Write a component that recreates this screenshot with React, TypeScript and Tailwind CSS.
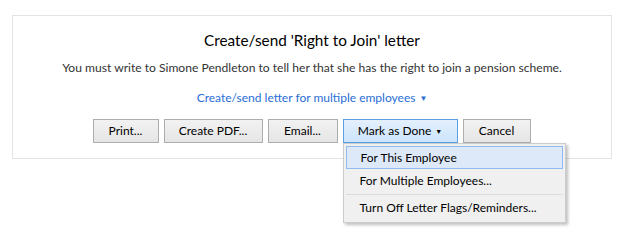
import React from "react";

const BTN =
  "h-6 border border-[#adadad] bg-gradient-to-b from-[#f2f2f2] to-[#e5e5e5] text-[12px] text-black flex items-center justify-center whitespace-nowrap";

const ITEM = "text-[12px] text-black flex items-center pl-[14px] whitespace-nowrap";

export default function App() {
  return (
    <main className="w-[624px] h-[241px] bg-white font-['Lato',sans-serif] pt-[15px] pl-3">
      <div className="w-[600px] h-[144px] border border-[#e3e3e3] flex flex-col items-center pt-[14px]">
        <h1 className="text-[15.3px] leading-5 text-black">Create/send 'Right to Join' letter</h1>
        <p className="mt-[10px] text-[12.1px] leading-4 text-[#333]">
          You must write to Simone Pendleton to tell her that she has the right to join a pension scheme.
        </p>
        <div className="mt-[14px] text-[12px] leading-4 text-[#2a6ed6] flex items-center gap-1">
          Create/send letter for multiple employees <span className="text-[8px]">▼</span>
        </div>
        <div className="mt-[13px] flex gap-[5px] ml-[-1px]">
          <button className={BTN + " w-[66px]"}>Print...</button>
          <button className={BTN + " w-[99px]"}>Create PDF...</button>
          <button className={BTN + " w-[70px]"}>Email...</button>
          <div className="relative">
            <button className="h-6 w-[115px] border border-[#5a9ee6] bg-gradient-to-b from-[#e4f0fc] to-[#cce4fc] text-[12px] text-black flex items-center justify-center gap-1">
              Mark as Done <span className="text-[7px]">▼</span>
            </button>
            <div className="absolute left-0 top-[24px] w-[223px] bg-[#f0f0f0] border border-[#cccccc] shadow-[2px_2px_3px_rgba(0,0,0,0.25)] p-[2px] z-10">
              <div className={ITEM + " h-[23px] border border-[#8fbcee] bg-[#dde9f8] pl-[13px]"}>For This Employee</div>
              <div className={ITEM + " h-[24px]"}>For Multiple Employees...</div>
              <div className="my-[1px] border-t border-[#dcdcdc]" />
              <div className={ITEM + " h-[24px]"}>Turn Off Letter Flags/Reminders...</div>
            </div>
          </div>
          <button className={BTN + " w-[68px]"}>Cancel</button>
        </div>
      </div>
    </main>
  );
}
